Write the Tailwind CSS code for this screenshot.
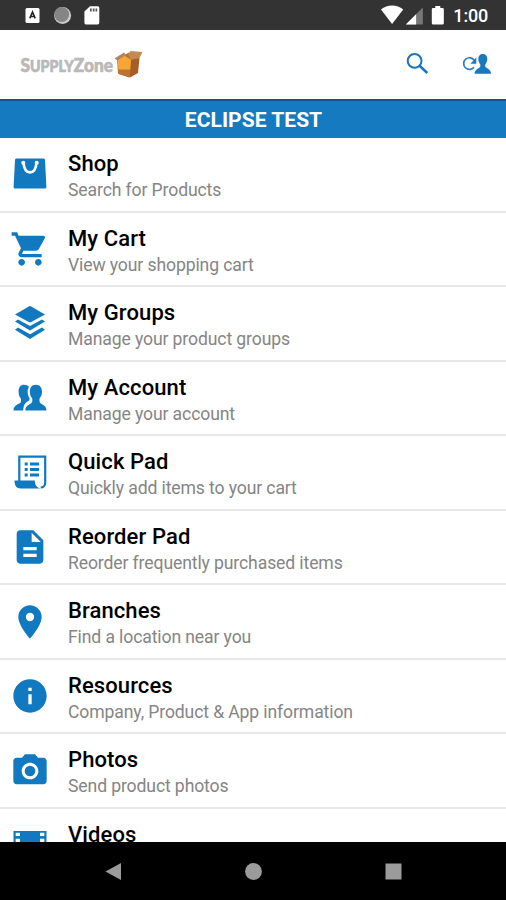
<!DOCTYPE html>
<html lang="en">
<head>
<meta charset="utf-8">
<title>SupplyZone</title>
<script src="https://cdn.jsdelivr.net/npm/@tailwindcss/browser@4"></script>
</head>
<body class="bg-white font-[Roboto,sans-serif]">
<div class="flex h-[900px] w-[506px] flex-col overflow-hidden bg-white">
  <div class="flex h-[29.5px] shrink-0 items-center justify-between bg-[#333333] pr-[18px] pl-[25px]">
    <svg class="h-[29px] w-[80px]" viewBox="25 0 80 29">
      <rect x="25.5" y="8" width="14" height="15" rx="1.5" fill="#fff"/>
      <path d="M29.8 18.4L32.5 12l2.7 6.4M30.7 16.5h3.6" fill="none" stroke="#222" stroke-width="1.6"/>
      <circle cx="62.6" cy="15.4" r="8.5" fill="#c9c9c9"/>
      <circle cx="61.7" cy="14.5" r="7.4" fill="#858585"/>
      <path d="M90 6.2h7.7a1.6 1.6 0 0 1 1.6 1.6v15a1.6 1.6 0 0 1-1.6 1.6H86a1.6 1.6 0 0 1-1.6-1.6V11.6z" fill="#fff"/>
      <path d="M90 8.4h1.7v3H90zM92.8 8.4h1.7v3h-1.7zM95.5 8.4h1.7v3h-1.7z" fill="#555"/>
    </svg>
    <div class="flex items-center gap-[8px]">
      <svg class="h-[29px] w-[65px]" viewBox="380.2 0 65 29">
        <path d="M392.3 24L381.2 9.6Q386 5.6 392.3 5.6T403.4 9.6z" fill="#fff"/>
        <path d="M423 7.5V24.5h-17z" fill="#777"/>
        <path d="M416.3 14.2V24.5H406z" fill="#fff"/>
        <path d="M435.5 6h5v2h2.2a1.3 1.3 0 0 1 1.3 1.3v14a1.3 1.3 0 0 1-1.3 1.3h-9.4a1.3 1.3 0 0 1-1.3-1.3v-14A1.3 1.3 0 0 1 433.300 8h2.200z" fill="#fff"/>
      </svg>
      <span class="mt-[3px] text-[18px] leading-none font-medium tracking-[-0.2px] text-white">1:00</span>
    </div>
  </div>
  <header class="flex h-[69px] shrink-0 items-center justify-between pr-[15px] pl-[20px]">
    <svg class="h-[40px] w-[125px]" viewBox="20 44 125 40">
      <g font-family="Lato, sans-serif" font-weight="900" fill="#b9b9b9" stroke="#b9b9b9" stroke-width=".7">
        <text x="20.500" y="71.500" font-size="19.500" textLength="92.500" lengthAdjust="spacingAndGlyphs">S<tspan font-size="16">UPPLY</tspan>Zone</text>
      </g>
      <path d="M117 59l12-6.500 10 5-1.500 15-8.500 5-11-4z" fill="#b96f2e"/>
      <path d="M117.500 60l6-5 8 5-1 10-12 0z" fill="#f5a635"/>
      <path d="M118 69.500h12.500l-.5 7.800-11-3z" fill="#bd7335"/>
      <path d="M131 60l8.500-2-1.500 15-8 4.500z" fill="#a65d26"/>
      <path d="M114.500 58.500l9.500-6 2 2.500-8.500 5.500z" fill="#b48362"/>
      <path d="M128 54.500l2.500-3.500 12 1-3 6-8.500 1.500z" fill="#c28a55"/>
    </svg>
    <div class="flex items-center gap-[29px]">
      <svg class="h-[29px] w-[28px]" viewBox="403 50 28 29"><circle cx="414.600" cy="60.800" r="6.900" fill="none" stroke="#1976bd" stroke-width="2"/><path d="M419.300 65.500L427.300 73" stroke="#1976bd" stroke-width="2.500"/></svg>
      <svg class="h-[29px] w-[31px]" viewBox="460 50 31 29">
        <path d="M474 67.200A5.800 5.800 0 1 1 474.200 60.200" fill="none" stroke="#2b80c0" stroke-width="1.700"/>
        <path d="M476.300 57.500v6.200h-6z" fill="#1b79be"/>
        <path d="M482.800 54c3 0 4.500 2 4.500 5 0 2.800-1.200 4.300-2 5.200v2.300c0 1.600 5.700 2.300 5.700 7.200h-16.400c0-4.900 5.700-5.600 5.700-7.200v-2.300c-.8-.9-2-2.400-2-5.200 0-3 1.500-5 4.500-5z" fill="#1779be"/>
      </svg>
    </div>
  </header>
  <div class="flex h-[39px] shrink-0 items-center justify-center border-t-2 border-[#0c5593] bg-[#157abf] pt-[2px] pl-[1px] text-[21px] leading-none font-bold text-white"><span class="tracking-[0.05px]">ECLIPSE TEST</span></div>
  <main class="min-h-0 flex-1 overflow-hidden pt-[0.500px] text-[#1179bf] [&_h2]:mt-[2px] [&_h2]:text-[22px] [&_h2]:leading-[26px] [&_h2]:font-medium [&_h2]:tracking-[0.1px] [&_h2]:text-black [&_p]:mt-[2px] [&_p]:text-[17.600px] [&_p]:leading-[22px] [&_p]:tracking-[-0.120px] [&_p]:text-[#858585] [&_section]:flex [&_section]:h-[74.560px] [&_section]:items-center [&_section]:gap-[18px] [&_section]:border-b-2 [&_section]:border-[#e7e7e7] [&_section]:pl-[10px] [&_svg]:size-[40px] [&_svg]:shrink-0 [&_svg]:fill-current">
    <section>
      <svg viewBox="0 0 40 40"><path d="M6.500 4.500h27a1.500 1.500 0 0 1 1.500 1.400L36.400 33a1.500 1.500 0 0 1-1.500 1.600H5.100A1.500 1.500 0 0 1 3.600 33L5 5.900a1.500 1.500 0 0 1 1.500-1.400z"/><path d="M13.500 8.500c.4 6 2 9.800 6.500 9.800s6.100-3.800 6.500-9.800" fill="none" stroke="#fff" stroke-width="2.700"/><circle cx="13.300" cy="8.800" r="2" fill="#fff"/><circle cx="26.700" cy="8.800" r="2" fill="#fff"/></svg>
      <div class="pt-[1.5px]"><h2>Shop</h2><p>Search for Products</p></div>
    </section>
    <section>
      <svg viewBox="0 0 24 24"><path d="M7 18c-1.100 0-1.990.9-1.990 2S5.900 22 7 22s2-.9 2-2-.9-2-2-2zM1 2v2h2l3.600 7.590-1.350 2.450c-.16.280-.25.610-.25.960 0 1.100.9 2 2 2h12v-2H7.420c-.14 0-.25-.11-.25-.25l.03-.12.900-1.630h7.450c.75 0 1.410-.41 1.750-1.030l3.580-6.490A1 1 0 0 0 20 4H5.210l-.94-2H1zm16 16c-1.100 0-1.990.9-1.990 2s.890 2 1.990 2 2-.9 2-2-.9-2-2-2z"/></svg>
      <div class="pt-[1.5px]"><h2>My Cart</h2><p>View your shopping cart</p></div>
    </section>
    <section>
      <svg viewBox="0 0 40 40"><path d="M18.800 3.400q1.200-.6 2.400 0L35 11.500 21.200 18.900q-1.200.6-2.400 0L5 11.500z"/><path d="M5 18.600l3-2 12 6.400 12-6.400 3 2-15 9z"/><path d="M5 26.700l3-2.200 12 6.700 12-6.700 3 2.200L20 36z"/></svg>
      <div class="pt-[1.5px]"><h2>My Groups</h2><p>Manage your product groups</p></div>
    </section>
    <section>
      <svg viewBox="0 0 40 40"><path d="M14 6.800c2.200 0 4 .7 5 2-2.300 3.500-1.300 8.700.5 11.200v2.200c-3.500 2-6 3.500-6.300 10.300H3.500c0-6.500 7.500-6 7.500-9.200v-2.600c-1.600-1.800-2.400-4.200-2.400-7 0-4.300 1.900-6.900 5.400-6.900z"/><path d="M25.800 6.800c4 0 6.200 2.800 6.200 7 0 3.200-1.200 5.300-2.500 6.700v2.800c0 3.200 7 3 7 9.200H15.300c0-6.200 7-6 7-9.200v-2.800c-1.300-1.400-2.500-3.500-2.500-6.700 0-4.200 2-7 6-7z"/></svg>
      <div class="pt-[1.5px]"><h2>My Account</h2><p>Manage your account</p></div>
    </section>
    <section>
      <svg viewBox="0 0 40 40"><path d="M9.300 29V4.700h25.900V31a4.500 4.500 0 0 1-4.500 4.500" fill="none" stroke="currentColor" stroke-width="2.200"/><path d="M4.500 28.500h20.300c0 4 1.500 6.800 5.500 8H10.500c-4 0-6-3-6-8z"/><path d="M14.700 10.500h3v3h-3zm5.300 0h9v3h-9zm-5.300 5.500h3v3h-3zm5.300 0h9v3h-9zm-5.300 5.500h3v3h-3zm5.300 0h9v3h-9z"/></svg>
      <div class="pt-[1.5px]"><h2>Quick Pad</h2><p>Quickly add items to your cart</p></div>
    </section>
    <section>
      <svg viewBox="0 0 24 24"><path d="M14 2H6c-1.100 0-1.990.9-1.990 2L4 20c0 1.100.890 2 1.990 2H18c1.100 0 2-.9 2-2V8l-6-6zm2 16H8v-2h8v2zm0-4H8v-2h8v2zm-3-5V3.500L18.500 9H13z"/></svg>
      <div class="pt-[1.5px]"><h2>Reorder Pad</h2><p>Reorder frequently purchased items</p></div>
    </section>
    <section>
      <svg viewBox="0 0 24 24"><path d="M12 2C8.130 2 5 5.130 5 9c0 5.250 7 13 7 13s7-7.750 7-13c0-3.870-3.130-7-7-7zm0 9.500a2.500 2.500 0 0 1 0-5 2.500 2.500 0 0 1 0 5z"/></svg>
      <div class="pt-[1.5px]"><h2>Branches</h2><p>Find a location near you</p></div>
    </section>
    <section>
      <svg viewBox="0 0 24 24"><path d="M12 2C6.480 2 2 6.480 2 12s4.480 10 10 10 10-4.480 10-10S17.520 2 12 2zm1 15h-2v-6h2v6zm0-8h-2V7h2v2z"/></svg>
      <div class="pt-[1.5px]"><h2>Resources</h2><p>Company, Product &amp; App information</p></div>
    </section>
    <section>
      <svg viewBox="0 0 24 24"><path d="M9 2L7.170 4H4c-1.100 0-2 .9-2 2v12c0 1.100.9 2 2 2h16c1.100 0 2-.9 2-2V6c0-1.100-.9-2-2-2h-3.170L15 2H9zm3 15c-2.760 0-5-2.240-5-5s2.240-5 5-5 5 2.240 5 5-2.240 5-5 5z"/><circle cx="12" cy="12" r="3.200"/></svg>
      <div class="pt-[1.5px]"><h2>Photos</h2><p>Send product photos</p></div>
    </section>
    <section>
      <svg viewBox="0 0 40 40"><path d="M3.500 6h33v27h-33z"/><path d="M5.700 7.800h4.200v3.200H5.700zm0 6h4.200v3.200H5.700zM30.100 7.800h4.200v3.200h-4.200zm0 6h4.200v3.200h-4.200z" fill="#fff"/></svg>
      <div class="pb-[22.5px]"><h2>Videos</h2></div>
    </section>
  </main>
  <nav class="flex h-[58px] shrink-0 items-center justify-between bg-black pr-[104px] pl-[105px] [&_svg]:size-[17px] [&_svg]:fill-[#9b9b9b]">
    <svg viewBox="0 0 17 17"><path d="M.5 8.500L16 0v17z"/></svg>
    <svg viewBox="0 0 17 17"><circle cx="8.500" cy="8.500" r="8.400"/></svg>
    <svg viewBox="0 0 17 17"><path d="M.5.500h16v16H.5z"/></svg>
  </nav>
</div>
</body>
</html>
